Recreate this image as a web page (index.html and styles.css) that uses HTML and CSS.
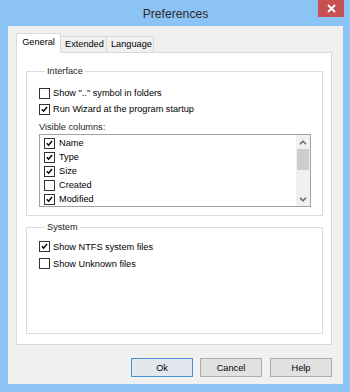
FILE: index.html
```html
<!DOCTYPE html>
<html>
<head>
<meta charset="utf-8">
<link rel="stylesheet" href="styles.css">
</head>
<body>
<div class="window">
  <div class="titlebar">
    <span class="title">Preferences</span>
    <div class="close"><svg width="9" height="9" viewBox="0 0 9 9"><path d="M1 1 L8 8 M8 1 L1 8" stroke="#fff" stroke-width="1.8"/></svg></div>
  </div>
  <div class="client">
    <div class="tabs">
      <div class="tab active">General</div>
      <div class="tab">Extended</div>
      <div class="tab">Language</div>
    </div>
    <div class="panel">
      <fieldset class="group interface">
        <legend>Interface</legend>
        <label class="row"><span class="cb"></span>Show ".." symbol in folders</label>
        <label class="row"><span class="cb checked"><svg viewBox="0 0 11 11"><path d="M2.2 5.2 L4.4 7.6 L8.6 2.4" /></svg></span>Run Wizard at the program startup</label>
        <div class="caption">Visible columns:</div>
        <div class="listbox">
          <div class="items">
            <div class="item"><span class="cb checked"><svg viewBox="0 0 11 11"><path d="M2.2 5.2 L4.4 7.6 L8.6 2.4" /></svg></span>Name</div>
            <div class="item"><span class="cb checked"><svg viewBox="0 0 11 11"><path d="M2.2 5.2 L4.4 7.6 L8.6 2.4" /></svg></span>Type</div>
            <div class="item"><span class="cb checked"><svg viewBox="0 0 11 11"><path d="M2.2 5.2 L4.4 7.6 L8.6 2.4" /></svg></span>Size</div>
            <div class="item"><span class="cb"></span>Created</div>
            <div class="item"><span class="cb checked"><svg viewBox="0 0 11 11"><path d="M2.2 5.2 L4.4 7.6 L8.6 2.4" /></svg></span>Modified</div>
          </div>
          <div class="scrollbar">
            <div class="arrow"><svg width="8" height="5" viewBox="0 0 8 5"><path d="M1 4.2 L4 1.2 L7 4.2" /></svg></div>
            <div class="track"><div class="thumb"></div></div>
            <div class="arrow"><svg width="8" height="5" viewBox="0 0 8 5"><path d="M1 0.8 L4 3.8 L7 0.8" /></svg></div>
          </div>
        </div>
      </fieldset>
      <fieldset class="group system">
        <legend>System</legend>
        <label class="row"><span class="cb checked"><svg viewBox="0 0 11 11"><path d="M2.2 5.2 L4.4 7.6 L8.6 2.4" /></svg></span>Show NTFS system files</label>
        <label class="row"><span class="cb"></span>Show Unknown files</label>
      </fieldset>
    </div>
    <div class="buttons">
      <button class="btn default">Ok</button>
      <button class="btn">Cancel</button>
      <button class="btn">Help</button>
    </div>
  </div>
</div>
</body>
</html>
```

FILE: styles.css
```css
* { box-sizing: border-box; }
html, body { margin: 0; padding: 0; }
body {
  font-family: "Liberation Sans", Arial, sans-serif;
  font-size: 9.2px;
  color: #000;
  background: #8bc3f4;
}
.window {
  width: 350px;
  height: 392px;
  background: #8bc3f4;
  display: flex;
  flex-direction: column;
  padding: 0 7px 8px 8px;
}
.titlebar {
  height: 26px;
  position: relative;
  display: flex;
  align-items: center;
  justify-content: center;
  flex: none;
}
.title {
  font-family: "Liberation Sans", Arial, sans-serif;
  font-size: 12.2px;
  color: #2b2b2b;
  margin-top: 1px;
}
.close {
  position: absolute;
  right: -1px;
  top: 0;
  width: 26px;
  height: 17px;
  background: #c75050;
  display: flex;
  align-items: center;
  justify-content: center;
}
.client {
  flex: 1;
  background: #f0f0f0;
  display: flex;
  flex-direction: column;
  padding: 7px 11px 0 8px;
}
.tabs {
  display: flex;
  height: 19px;
  flex: none;
  align-items: flex-end;
  position: relative;
  z-index: 1;
}
.tab {
  height: 16px;
  border: 1px solid #d9d9d9;
  border-bottom: none;
  background: #f0f0f0;
  padding: 0 4px;
  line-height: 15px;
  margin-left: -1px;
  text-align: center;
  white-space: nowrap;
}
.tab.active {
  height: 20px;
  background: #fff;
  margin-left: 0;
  margin-bottom: -1px;
  line-height: 17px;
  z-index: 2;
  position: relative;
  width: 45px;
}
.tab:nth-child(2) { width: 47px; margin-left: -1px; }
.tab:nth-child(3) { width: 48px; }
.panel {
  height: 293px;
  background: #fff;
  border: 1px solid #d9d9d9;
  display: flex;
  flex-direction: column;
  padding: 0 8px 10px 9px;
  flex: none;
}
.group {
  border: 1px solid #dcdcdc;
  margin: 0;
  min-width: 0;
}
.group legend {
  padding: 0 2px;
  margin-left: 6px;
  line-height: 12px;
  color: #1e1e1e;
}
.interface {
  margin-top: 12px;
  padding: 8px 11px 8px 12px;
}
.system {
  margin-top: 5px;
  padding: 5px 11px 0 12px;
  flex: 1;
}
.row {
  display: flex;
  align-items: center;
  height: 16px;
  white-space: nowrap;
}
.system .row { height: 17px; }
.cb {
  width: 11px;
  height: 11px;
  border: 1px solid #333;
  background: #fff;
  margin-right: 3px;
  flex: none;
  display: flex;
}
.cb svg {
  width: 9px;
  height: 9px;
  fill: none;
  stroke: #000;
  stroke-width: 1.7;
}
.caption {
  margin-top: 3px;
  height: 14px;
  line-height: 14px;
  color: #1e1e1e;
}
.listbox {
  height: 73px;
  border: 1px solid #a0a0a0;
  display: flex;
  background: #fff;
}
.items {
  flex: 1;
  padding: 1px 0 0 4px;
}
.item {
  height: 14px;
  display: flex;
  align-items: center;
}
.item .cb { margin-right: 4px; }
.scrollbar {
  width: 14px;
  background: #f0f0f0;
  display: flex;
  flex-direction: column;
}
.arrow {
  height: 14px;
  display: flex;
  align-items: center;
  justify-content: center;
}
.arrow svg {
  fill: none;
  stroke: #606060;
  stroke-width: 1.4;
}
.track {
  flex: 1;
  padding: 0 1px;
}
.thumb {
  height: 21px;
  background: #cdcdcd;
}
.buttons {
  display: flex;
  justify-content: flex-end;
  padding-top: 13px;
  gap: 7px;
}
.btn {
  width: 62px;
  height: 19px;
  font-family: "Liberation Sans", Arial, sans-serif;
  font-size: 9.2px;
  color: #000;
  background: #e1e1e1;
  border: 1px solid #adadad;
  padding: 0;
  margin: 0;
}
.btn.default {
  border-color: #4a90d9;
  background: #e3e8ee;
}
.btn:last-child { margin-left: 1px; }
```
